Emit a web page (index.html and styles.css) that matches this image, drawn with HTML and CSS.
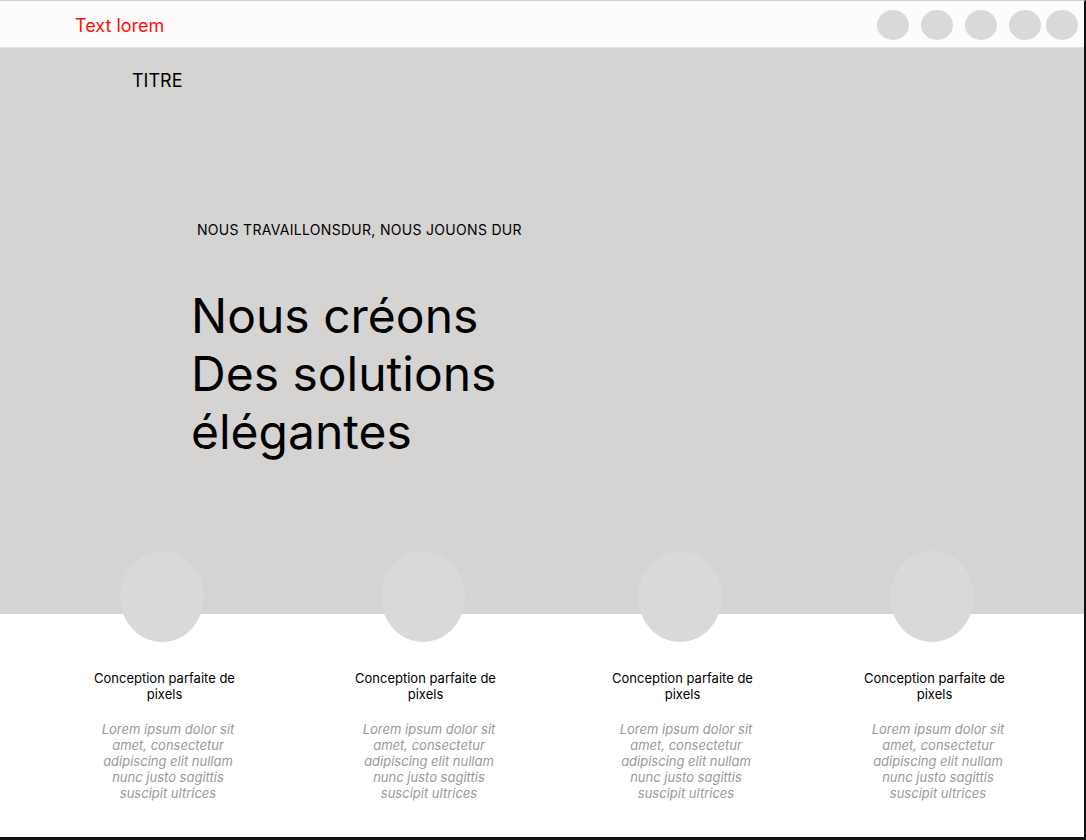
FILE: index.html
```html
<!DOCTYPE html>
<html lang="fr">
<head>
<meta charset="utf-8">
<title>Maquette</title>
<link rel="stylesheet" href="styles.css">
</head>
<body>
<div class="frame">
  <header class="topbar">
    <span class="brand">Text lorem</span>
    <div class="dots">
      <span class="dot"></span>
      <span class="dot"></span>
      <span class="dot"></span>
      <span class="dot"></span>
      <span class="dot last"></span>
    </div>
  </header>
  <section class="hero">
    <div class="titre">TITRE</div>
    <p class="tagline">NOUS TRAVAILLONSDUR, NOUS JOUONS DUR</p>
    <h1 class="headline">Nous créons<br>Des solutions<br>élégantes</h1>
  </section>
  <section class="features">
    <div class="feature">
      <div class="bubble"></div>
      <h3 class="f-title">Conception parfaite de pixels</h3>
      <p class="f-text">Lorem ipsum dolor sit amet, consectetur adipiscing elit nullam nunc justo sagittis suscipit ultrices</p>
    </div>
    <div class="feature">
      <div class="bubble"></div>
      <h3 class="f-title">Conception parfaite de pixels</h3>
      <p class="f-text">Lorem ipsum dolor sit amet, consectetur adipiscing elit nullam nunc justo sagittis suscipit ultrices</p>
    </div>
    <div class="feature">
      <div class="bubble"></div>
      <h3 class="f-title">Conception parfaite de pixels</h3>
      <p class="f-text">Lorem ipsum dolor sit amet, consectetur adipiscing elit nullam nunc justo sagittis suscipit ultrices</p>
    </div>
    <div class="feature">
      <div class="bubble"></div>
      <h3 class="f-title">Conception parfaite de pixels</h3>
      <p class="f-text">Lorem ipsum dolor sit amet, consectetur adipiscing elit nullam nunc justo sagittis suscipit ultrices</p>
    </div>
  </section>
</div>
</body>
</html>
```

FILE: styles.css
```css
* { box-sizing: border-box; }
html, body { margin: 0; padding: 0; background: #ffffff; }
body { font-family: Inter, "Liberation Sans", sans-serif; color: #000; }

.frame {
  width: 1086px;
  height: 840px;
  border-top: 1px solid #cfcfcf;
  border-right: 2px solid #111;
  border-bottom: 3px solid #111;
  background: #ffffff;
  overflow: hidden;
}

.topbar {
  height: 47px;
  background: #fdfcfb;
  border-bottom: 1px solid #e2e1e0;
  display: flex;
  align-items: center;
  justify-content: space-between;
  padding-left: 75px;
  padding-right: 6px;
  padding-top: 2px;
}
.brand {
  color: #ff0f0f;
  font-size: 18px;
  line-height: 22px;
  padding-top: 2px;
}
.dots { display: flex; align-items: center; gap: 12px; }
.dot {
  width: 32px;
  height: 30px;
  border-radius: 50%;
  background: #d9d9d9;
}
.dot.last { margin-left: -7px; }

.hero {
  height: 566px;
  background: #d5d4d3;
  padding-top: 21px;
}
.titre {
  margin-left: 132px;
  font-size: 18px;
  line-height: 24px;
}
.tagline {
  margin: 128px 0 0 197px;
  font-size: 14px;
  line-height: 18px;
  letter-spacing: 0.3px;
}
.headline {
  margin: 48px 0 0 191px;
  font-size: 48px;
  font-weight: 400;
  line-height: 58px;
}

.features {
  margin-top: -63px;
  display: grid;
  grid-template-columns: 261px 257px 252px 150px;
  padding-left: 87px;
}
.feature {
  width: 150px;
  display: flex;
  flex-direction: column;
  align-items: center;
  text-align: center;
}
.bubble {
  width: 84px;
  height: 91px;
  border-radius: 50%;
  background: #d9d9d9;
}
.f-title {
  margin: 28px 0 0;
  padding-left: 5px;
  font-size: 13px;
  font-weight: 400;
  line-height: 16px;
}
.f-text {
  margin: 19px 0 0;
  font-size: 13px;
  line-height: 16px;
  font-style: italic;
  color: #9a9a9a;
  padding: 0 0 0 12px;
}
```
